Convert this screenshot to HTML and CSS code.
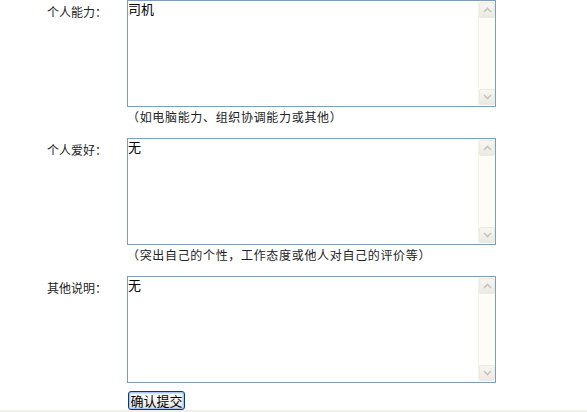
FILE: index.html
```html
<!DOCTYPE html>
<html lang="zh-CN">
<head>
<meta charset="utf-8">
<title>个人信息</title>
<link rel="stylesheet" href="styles.css">
</head>
<body>
<div class="page">
  <div class="form">
    <div class="label">个人能力：</div>
    <div class="field">
      <div class="box">
        <div class="text">司机</div>
        <div class="sb">
          <div class="sb-btn"><svg width="9" height="6" viewBox="0 0 9 6"><path d="M1 5 L4.5 1.5 L8 5" fill="none" stroke="#c9c6b8" stroke-width="1.6"/></svg></div>
          <div class="sb-track"></div>
          <div class="sb-btn"><svg width="9" height="6" viewBox="0 0 9 6"><path d="M1 1 L4.5 4.5 L8 1" fill="none" stroke="#c9c6b8" stroke-width="1.6"/></svg></div>
        </div>
      </div>
      <div class="hint">（如电脑能力、组织协调能力或其他）</div>
    </div>

    <div class="label">个人爱好：</div>
    <div class="field">
      <div class="box">
        <div class="text">无</div>
        <div class="sb">
          <div class="sb-btn"><svg width="9" height="6" viewBox="0 0 9 6"><path d="M1 5 L4.5 1.5 L8 5" fill="none" stroke="#c9c6b8" stroke-width="1.6"/></svg></div>
          <div class="sb-track"></div>
          <div class="sb-btn"><svg width="9" height="6" viewBox="0 0 9 6"><path d="M1 1 L4.5 4.5 L8 1" fill="none" stroke="#c9c6b8" stroke-width="1.6"/></svg></div>
        </div>
      </div>
      <div class="hint">（突出自己的个性，工作态度或他人对自己的评价等）</div>
    </div>

    <div class="label">其他说明：</div>
    <div class="field">
      <div class="box">
        <div class="text">无</div>
        <div class="sb">
          <div class="sb-btn"><svg width="9" height="6" viewBox="0 0 9 6"><path d="M1 5 L4.5 1.5 L8 5" fill="none" stroke="#c9c6b8" stroke-width="1.6"/></svg></div>
          <div class="sb-track"></div>
          <div class="sb-btn"><svg width="9" height="6" viewBox="0 0 9 6"><path d="M1 1 L4.5 4.5 L8 1" fill="none" stroke="#c9c6b8" stroke-width="1.6"/></svg></div>
        </div>
      </div>
      <div class="actions">
        <button class="submit" type="button">确认提交</button>
      </div>
    </div>
  </div>
  <div class="statusbar"></div>
</div>
</body>
</html>
```

FILE: styles.css
```css
html, body {
  margin: 0;
  padding: 0;
  background: #ffffff;
}
body {
  font-family: "Noto Sans CJK SC", "DejaVu Sans", sans-serif;
  font-size: 12px;
  color: #000;
}
.page {
  width: 587px;
  height: 412px;
  display: flex;
  flex-direction: column;
  overflow: hidden;
}
.form {
  flex: 1;
  display: grid;
  grid-template-columns: 127px 369px;
  align-content: start;
}
.label {
  text-align: right;
  padding-right: 20px;
  padding-top: 4px;
  font-size: 12px;
  line-height: 16px;
  color: #222;
}
.field {
  display: flex;
  flex-direction: column;
}
.box {
  box-sizing: border-box;
  width: 369px;
  height: 107px;
  border: 1px solid #7f9db9;
  display: flex;
  background: #fff;
}
.text {
  flex: 1;
  font-size: 13px;
  line-height: 14px;
  padding-top: 1px;
  color: #000;
}
.sb {
  width: 17px;
  display: flex;
  flex-direction: column;
  background: #fdfdf6;
  border-left: 1px solid #f4f3ea;
  box-sizing: border-box;
}
.sb-btn {
  height: 16px;
  margin: 1px 0;
  box-sizing: border-box;
  border: 1px solid #ebeae3;
  border-radius: 2px;
  background: linear-gradient(#f7f6f1, #ebeae2);
  display: flex;
  align-items: center;
  justify-content: center;
}
.sb-track {
  flex: 1;
}
.hint {
  padding-top: 2px;
  height: 31px;
  box-sizing: border-box;
  font-size: 12px;
  line-height: 16px;
  letter-spacing: 0.67px;
  color: #222;
  white-space: nowrap;
}
.actions {
  padding-top: 8px;
  padding-left: 1px;
}
.submit {
  box-sizing: border-box;
  height: 19px;
  width: 57px;
  padding: 0;
  margin: 0;
  font-family: "Noto Sans CJK SC", "DejaVu Sans", sans-serif;
  font-size: 13px;
  line-height: 15px;
  color: #000;
  border: 1px solid #003c74;
  border-radius: 3px;
  background: linear-gradient(#fefefe, #f1f0ea 70%, #d8d5c8);
  box-shadow: inset 0 0 0 1px #a9c5f0, inset 0 0 0 2px #cfe0fa;
}
.statusbar {
  height: 3px;
  background: #f0efe8;
}
```
